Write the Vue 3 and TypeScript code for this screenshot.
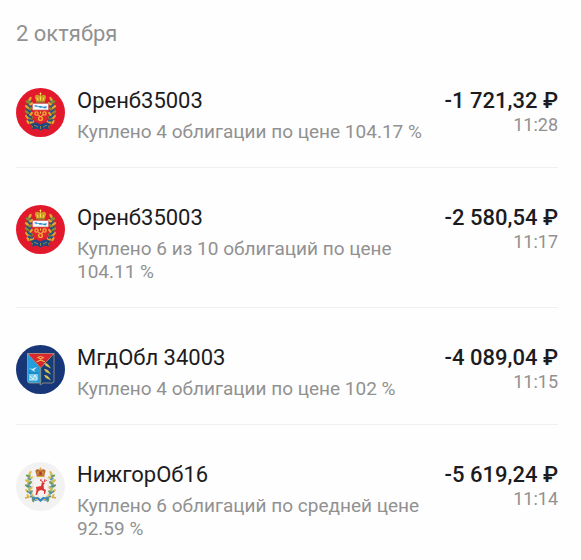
<script setup lang="ts">
type Emblem = 'orenburg' | 'magadan' | 'nizhny'

interface Operation {
  id: number
  emblem: Emblem
  title: string
  details: string
  amount: string
  time: string
}

const operations: Operation[] = [
  { id: 1, emblem: 'orenburg', title: 'Оренб35003', details: 'Куплено 4 облигации по цене 104.17 %', amount: '-1 721,32 ₽', time: '11:28' },
  { id: 2, emblem: 'orenburg', title: 'Оренб35003', details: 'Куплено 6 из 10 облигаций по цене 104.11\u00a0%', amount: '-2 580,54 ₽', time: '11:17' },
  { id: 3, emblem: 'magadan', title: 'МгдОбл 34003', details: 'Куплено 4 облигации по цене 102 %', amount: '-4 089,04 ₽', time: '11:15' },
  { id: 4, emblem: 'nizhny', title: 'НижгорОб16', details: 'Куплено 6 облигаций по средней цене 92.59\u00a0%', amount: '-5 619,24 ₽', time: '11:14' },
]

// Left branch of the wreath: centre, tilt and tone of every leaf.
const leaves = [
  { x: 14, y: 11, a: -60, t: 0 },
  { x: 12, y: 14, a: 25, t: 1 },
  { x: 15, y: 16, a: -35, t: 0 },
  { x: 11, y: 19, a: 35, t: 0 },
  { x: 14, y: 21, a: -40, t: 1 },
  { x: 11, y: 24, a: 30, t: 1 },
  { x: 15, y: 26, a: -50, t: 0 },
  { x: 11, y: 29, a: 50, t: 0 },
  { x: 15, y: 30, a: -30, t: 1 },
  { x: 12, y: 34, a: 65, t: 0 },
  { x: 16, y: 34, a: -30, t: 0 },
  { x: 17, y: 38, a: 75, t: 1 },
]
const sides = ['translate(0 0)', 'translate(49 0) scale(-1 1)']
</script>

<template>
  <main class="history">
    <h2 class="date">2 октября</h2>
    <ul class="list">
      <li v-for="op in operations" :key="op.id" class="row">
        <svg class="avatar" viewBox="0 0 49 49" aria-hidden="true">
          <template v-if="op.emblem === 'orenburg'">
            <circle cx="24.5" cy="24.5" r="24.5" fill="#e2192d" />
            <g v-for="side in sides" :key="side" :transform="side">
              <path d="M14 12C11 19 11 31 19 38" fill="none" stroke="#4d5c50" stroke-width="4" />
              <ellipse
                v-for="(leaf, i) in leaves" :key="i" :cx="leaf.x" :cy="leaf.y" rx="2.5" ry="1.3"
                :transform="`rotate(${leaf.a} ${leaf.x} ${leaf.y})`" :fill="leaf.t ? '#8a8b35' : '#e3a52f'"
              />
              <path d="M12 17l3 2M11 22l4 2M11 27l5 3M12 32l5 1" stroke="#1c5590" stroke-width="1.5" />
            </g>
            <path d="M17 16h15v12q0 5-7.5 7-7.5-2-7.5-7z" fill="#df2733" />
            <path d="M16.5 15.5h16v6.5h-16z" fill="#f5fafc" stroke="#cf6a55" stroke-width=".6" />
            <path d="M18 18l2-1 2 1.2 3-.2 2 .8 4-.5-1 2h-2l-1-.7-3 .2-2-1h-2z" fill="#248acb" />
            <g fill="none" stroke="#f2ac2d" stroke-width="1.4">
              <circle cx="20.5" cy="25.5" r="1.6" />
              <circle cx="28.5" cy="25.5" r="1.6" />
              <circle cx="24.5" cy="30.5" r="1.9" />
            </g>
            <path d="M22 27l2.5 1.5L27 27M24.5 23.5v2" fill="none" stroke="#f5c54c" />
            <path d="M14 36l6-1.500 4.500 2 4.500-2 6 1.500-3 2.500 1 3-5-1-3.500 2-3.500-2-5 1 1-3z" fill="#194a83" />
            <path d="M18 37l4 2M31 37l-4 2M24.500 38v3" stroke="#b8913a" stroke-width=".8" />
            <path d="M19.500 11c-2-4 2-5 4-3.500h2c2-1.500 6-.5 4 3.500l-1 3.500h-8z" fill="#cf9a24" />
            <path d="M24.500 4.500v3M23.500 5.500h2M21 9.500l1 3M28 9.500l-1 3M24.500 8.500v4" fill="none" stroke="#f7dc55" stroke-width="1" />
            <path d="M20.500 14h8" stroke="#6b7432" />
          </template>

          <template v-else-if="op.emblem === 'magadan'">
            <circle cx="24.500" cy="24.500" r="24.500" fill="#173779" />
            <path d="M11.500 8.500h26.500V36q0 2-2 2h-9l-2.200 2-2.300-2h-9q-2 0-2-2z" fill="#153d78" />
            <path d="M11.500 8.500L24.500 23v15h-11q-2 0-2-2z" fill="#259ddc" />
            <path d="M11.500 8.500H38L24.700 23z" fill="#d8272f" />
            <path d="M11.500 8.500H38V36q0 2-2 2h-9l-2.200 2-2.300-2h-9q-2 0-2-2zM11.500 8.500L24.700 23 38 8.500M24.700 23v16" fill="none" stroke="#bda985" stroke-width=".7" />
            <path d="M21 13q3.500-3 7 0M22 16.500l5-4M27.500 16.500l-5-4M20.500 16.500h2M27 16.500h2" fill="none" stroke="#efb04b" stroke-width="1.100" />
            <path d="M13 23l3 1 5-2-3 3 1 2-3-2z" fill="#d9f1f7" />
            <path d="M13 29h9v6h-9z" fill="#81cbea" />
            <path d="M14 31l3 3 2-4 2 4M13 35h8" fill="none" stroke="#e4f7fa" stroke-width=".9" />
            <path d="M12.500 28h10M15 25l-2 2" stroke="#1571ac" stroke-width=".8" />
            <g fill="#dcc253">
              <path d="M28 18q3.500-.5 5 2.500l2 3-3-1.500q-3-1-4-4z" />
              <path d="M28 24q3.500-.5 5 2.500l2 3-3-1.500q-3-1-4-4z" />
              <path d="M28 30q3.500-.5 5 2.500l2 3-3-1.500q-3-1-4-4z" />
            </g>
          </template>

          <template v-else>
            <circle cx="24.500" cy="24.500" r="24.500" fill="#f2f2f2" />
            <g v-for="side in sides" :key="side" :transform="side">
              <path d="M14 12C11 19 12 32 20 37" fill="none" stroke="#a3bd91" stroke-width="2.500" />
              <ellipse
                v-for="(leaf, i) in leaves" :key="i" :cx="leaf.x" :cy="leaf.y" rx="2.400" ry="1.200"
                :transform="`rotate(${leaf.a} ${leaf.x} ${leaf.y})`" :fill="leaf.t ? '#729a5f' : '#dfbb50'"
              />
              <path d="M12 16l3 2M11 23l4 2M11 29l4 3M14 34l6 3" stroke="#3e8fc0" stroke-width="1.300" />
              <path d="M9 36l4-1" stroke="#dba63f" stroke-width="1.600" />
            </g>
            <path d="M17 16h15v16q0 2-2 2h-4l-1.500 2-1.500-2h-4q-2 0-2-2z" fill="#f7f2ef" stroke="#ddd6c8" stroke-width=".5" />
            <path d="M20 25l5-1 1-4 3 1-1.500 2 .5 4 2 1-1 4h-1v-3l-3-1-2.500 1-1.500 4h-1.500l1-5z" fill="#dd3434" />
            <path d="M27 20l-3-2M28 20l1-3M25 19v-2M28 20l3-2" fill="none" stroke="#d33a3c" stroke-width=".9" />
            <path d="M16 36l6-1 2.500 2 2.500-2 6 1-3 3-3-1-2.500 2-2.500-2-3 1z" fill="#3681ba" />
            <path d="M19 37l3 1M30 37l-3 1" stroke="#e6bb47" stroke-width="1.200" />
            <path d="M20 11c-2-3.500 2-4.500 4-3h1c2-1.500 6-.5 4 3l-1 4h-7z" fill="#b96d35" />
            <path d="M24.500 5.500v3M23.500 6.500h2M20.500 14.500h8M22 9.500v3M27 9.500v3" stroke="#dda449" stroke-width="1" />
            <circle cx="24.500" cy="11.500" r="1.200" fill="#a83230" />
          </template>
        </svg>

        <div class="info">
          <h3 class="title">{{ op.title }}</h3>
          <p class="details">{{ op.details }}</p>
        </div>
        <div class="sum">
          <strong class="amount">{{ op.amount }}</strong>
          <time class="time">{{ op.time }}</time>
        </div>
      </li>
    </ul>
  </main>
</template>

<style>
body {
  background: #fefefe;
}
</style>

<style scoped>
.history {
  padding: 20px 23px 0 16px;
  font-family: Roboto, "Noto Sans", sans-serif;
  color: #1c1c1e;
}

.date {
  margin: 0;
  font-size: 22px;
  font-weight: 400;
  line-height: 28px;
  color: #919191;
}

.list {
  margin: 3px 0 0;
  padding: 0;
  list-style: none;
}

.row {
  display: flex;
  align-items: flex-start;
  gap: 12px;
  padding: 36px 0 24px;
  border-bottom: 1px solid #efefef;
}

.row:last-child {
  border-bottom: 0;
  padding-bottom: 16px;
}

.avatar {
  flex: none;
  width: 49px;
  height: 49px;
  margin-top: 1px;
}

.info {
  flex: 1;
  min-width: 0;
}

.title {
  margin: 0;
  font-size: 22px;
  font-weight: 400;
  line-height: 28px;
}

.details {
  margin: 5px 0 0;
  font-size: 19px;
  line-height: 23px;
  color: #919191;
}

.sum {
  display: flex;
  flex: none;
  flex-direction: column;
  align-items: flex-end;
  white-space: nowrap;
}

.amount {
  font-size: 22px;
  font-weight: 500;
  line-height: 28px;
}

.time {
  font-size: 18px;
  line-height: 20px;
  color: #919191;
}
</style>
